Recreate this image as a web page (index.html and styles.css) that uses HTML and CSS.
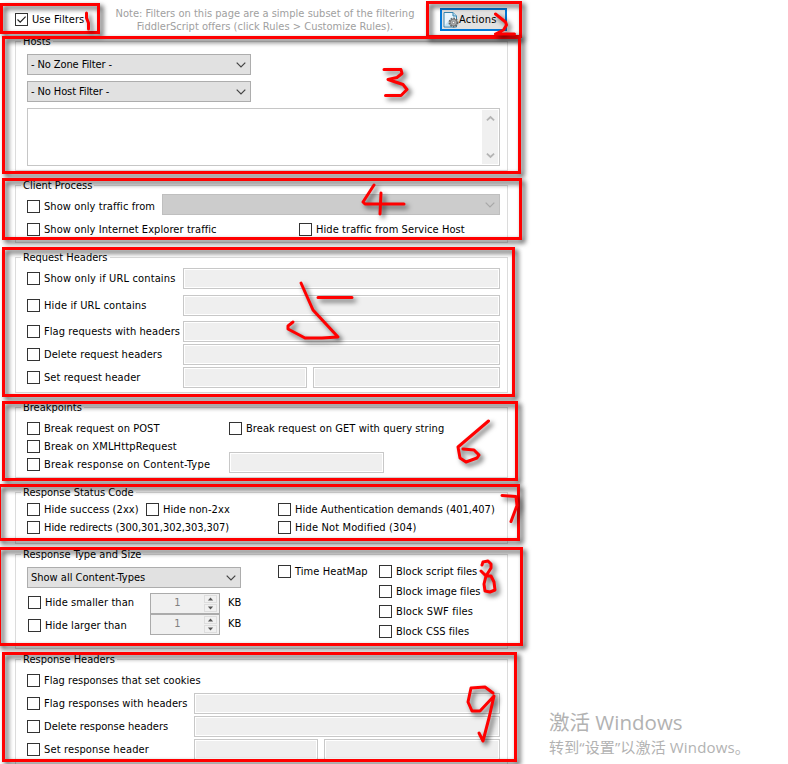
FILE: index.html
```html
<!DOCTYPE html>
<html lang="en">
<head>
<meta charset="utf-8">
<title>Filters</title>
<link rel="stylesheet" href="styles.css">
</head>
<body>
<main class="page">
  <header class="top">
    <label class="check use"><i class="box ticked"><svg viewBox="0 0 11 11"><path d="M1.5 5.5 4.2 8.2 9.6 2.6"/></svg></i><span>Use Filters</span></label>
    <p class="note">Note: Filters on this page are a simple subset of the filtering<br>FiddlerScript offers (click Rules &gt; Customize Rules).</p>
    <button class="actions"><svg width="16" height="16" viewBox="0 0 16 16"><path d="M1 .5h9l3.500 3.500v11H1z" fill="#eaf6fd" stroke="#3683ae"/><path d="M10 .5V4h3.500" fill="#b9dcef" stroke="#3683ae"/><path d="M2 13 9 5v9H2z" fill="#c4e2f3"/><g fill="#b4b4b4" stroke="#666"><circle cx="10.500" cy="10.500" r="4" stroke-width="2" stroke-dasharray="1.6 1"/><circle cx="10.500" cy="10.500" r="3.200" stroke-width=".7"/><circle cx="10.500" cy="10.500" r="1.200" fill="#fff" stroke-width=".7"/></g></svg><span>Actions</span></button>
  </header>

  <section class="group hosts">
    <h2>Hosts</h2>
    <div class="select">- No Zone Filter -<svg class="chev" viewBox="0 0 10 6"><path d="M.7.7 5 5 9.3.7"/></svg></div>
    <div class="select">- No Host Filter -<svg class="chev" viewBox="0 0 10 6"><path d="M.7.7 5 5 9.3.7"/></svg></div>
    <div class="area"><div class="scroll"><svg viewBox="0 0 10 7"><path d="M1 5.500 5 1.800 9 5.500"/></svg><svg viewBox="0 0 10 7"><path d="M1 1.500 5 5.200 9 1.500"/></svg></div></div>
  </section>

  <section class="group client">
    <h2>Client Process</h2>
    <div class="row h23"><label class="check w135"><i class="box"></i><span>Show only traffic from</span></label><div class="select off"><svg class="chev" viewBox="0 0 10 6"><path d="M.7.7 5 5 9.3.7"/></svg></div></div>
    <div class="row h23"><label class="check w272"><i class="box"></i><span>Show only Internet Explorer traffic</span></label><label class="check"><i class="box"></i><span>Hide traffic from Service Host</span></label></div>
  </section>

  <section class="group request">
    <h2>Request Headers</h2>
    <div class="row h27"><label class="check w156"><i class="box"></i><span class="wide">Show only if URL contains</span></label><div class="input"></div></div>
    <div class="row h27"><label class="check w156"><i class="box"></i><span class="wide">Hide if URL contains</span></label><div class="input"></div></div>
    <div class="row h25"><label class="check w156"><i class="box"></i><span>Flag requests with headers</span></label><div class="input"></div></div>
    <div class="row h23"><label class="check w156"><i class="box"></i><span>Delete request headers</span></label><div class="input"></div></div>
    <div class="row h23"><label class="check w156"><i class="box"></i><span>Set request header</span></label><div class="input name"></div><div class="input"></div></div>
  </section>

  <section class="group breaks">
    <h2>Breakpoints</h2>
    <div class="row h18"><label class="check w202"><i class="box"></i><span>Break request on POST</span></label><label class="check"><i class="box"></i><span>Break request on GET with query string</span></label></div>
    <div class="row h18"><label class="check"><i class="box"></i><span class="wide">Break on XMLHttpRequest</span></label></div>
    <div class="row h18"><label class="check w202"><i class="box"></i><span class="wider">Break response on Content-Type</span></label><div class="input type"></div></div>
  </section>

  <section class="group status">
    <h2>Response Status Code</h2>
    <div class="row h18"><label class="check w119"><i class="box"></i><span>Hide success (2xx)</span></label><label class="check w132"><i class="box"></i><span>Hide non-2xx</span></label><label class="check"><i class="box"></i><span class="plain">Hide Authentication demands (401,407)</span></label></div>
    <div class="row h18"><label class="check w251"><i class="box"></i><span class="tight">Hide redirects (300,301,302,303,307)</span></label><label class="check"><i class="box"></i><span class="wide">Hide Not Modified (304)</span></label></div>
  </section>

  <section class="group size">
    <h2>Response Type and Size</h2>
    <div class="cols">
      <div class="limits">
        <div class="select plain">Show all Content-Types<svg class="chev" viewBox="0 0 10 6"><path d="M.7.7 5 5 9.3.7"/></svg></div>
        <div class="limit-grid">
          <div class="limit-labels"><label class="check"><i class="box"></i><span>Hide smaller than</span></label><label class="check"><i class="box"></i><span>Hide larger than</span></label></div>
          <div class="spins">
            <div class="spin"><b>1</b><em><svg viewBox="0 0 13 8"><path d="M3 6h7L6.500 2z"/></svg><svg viewBox="0 0 13 8"><path d="M3 2h7L6.500 6z"/></svg></em></div>
            <div class="spin"><b>1</b><em><svg viewBox="0 0 13 8"><path d="M3 6h7L6.500 2z"/></svg><svg viewBox="0 0 13 8"><path d="M3 2h7L6.500 6z"/></svg></em></div>
          </div>
          <div class="units"><span>KB</span><span>KB</span></div>
        </div>
      </div>
      <label class="check heat"><i class="box"></i><span>Time HeatMap</span></label>
      <div class="blocks">
        <label class="check"><i class="box"></i><span class="plain">Block script files</span></label>
        <label class="check"><i class="box"></i><span class="plain">Block image files</span></label>
        <label class="check"><i class="box"></i><span class="wide">Block SWF files</span></label>
        <label class="check"><i class="box"></i><span class="plain">Block CSS files</span></label>
      </div>
    </div>
  </section>

  <section class="group headers">
    <h2>Response Headers</h2>
    <div class="row h23"><label class="check"><i class="box"></i><span class="plain">Flag responses that set cookies</span></label></div>
    <div class="row h23"><label class="check w167"><i class="box"></i><span>Flag responses with headers</span></label><div class="input"></div></div>
    <div class="row h23"><label class="check w167"><i class="box"></i><span class="plain">Delete response headers</span></label><div class="input"></div></div>
    <div class="row h23"><label class="check w167"><i class="box"></i><span class="wide">Set response header</span></label><div class="input name"></div><div class="input"></div></div>
  </section>

  <aside class="activate"><p class="big">激活 Windows</p><p>转到“设置”以激活 Windows。</p></aside>

  <svg class="marks" width="788" height="764" viewBox="0 0 788 764">
    <g class="frames">
      <rect x="1.500" y="4.500" width="97" height="28"/>
      <rect x="427.500" y="2.500" width="93" height="34"/>
      <rect x="3.500" y="37.500" width="516" height="135"/>
      <rect x="3.500" y="179.500" width="517" height="59"/>
      <rect x="3.500" y="248.500" width="510" height="147"/>
      <rect x="3.500" y="402.500" width="513" height="77"/>
      <rect x="-.5" y="485.500" width="519" height="54"/>
      <rect x="-.5" y="548.500" width="522" height="96"/>
      <rect x="3.500" y="653.500" width="512" height="107"/>
    </g>
    <g class="ink">
      <path d="M86.500 13v5l2 5v6"/>
      <path d="M495.500 14l10 8 1 3-3 5-8 4h19"/>
      <path d="M384 69.500h17l1 4-5 4-9 2 15 5 4 5-6 6H385.500"/>
      <path d="M374 185l-11 17 2 2h39M381 193l-1 21"/>
      <path d="M301 283l12 27 25 27-16 1h-17l-17-9v-3l5-4M318 297.500h34"/>
      <path d="M488.500 421L458 447l2 11 6 4 11-4 2-3-5-5-11-1"/>
      <path d="M502 495.500l14 1 1 9-6 16"/>
      <path d="M482 565l1-3 5-1 3 3v4l-5 8-5-5M486 576l-2 8 1 7 5 1 5-2-1-8-3-6z"/>
      <path d="M493 693l-8-6-14 1-3 14 4 9h8l14-15-5 22-6 23-4-8"/>
    </g>
  </svg>
</main>
</body>
</html>
```
FILE: styles.css
```css
* { box-sizing: border-box; }
body { margin: 0; background: #fff; overflow: hidden; }
p, h2 { margin: 0; font-weight: normal; }
.page { position: relative; width: 788px; height: 764px; overflow: hidden; font: 11px/14px "DejaVu Sans Condensed", "DejaVu Sans", sans-serif; font-stretch: condensed; color: #000; }
.top { display: flex; height: 41px; padding-left: 15px; }
.check { display: flex; align-items: center; flex: none; height: 13px; white-space: nowrap; letter-spacing: .08px; }
.check span { padding-top: 1px; }
.check .wide { letter-spacing: .14px; }
.check .wider { letter-spacing: .22px; }
.check .tight { letter-spacing: -.05px; }
.check .plain { letter-spacing: .02px; }
.box { width: 13px; height: 13px; margin-right: 4px; flex: none; border: 1px solid #333; background: #fff; }
.ticked svg { display: block; fill: none; stroke: #222; stroke-width: 1.2; }
.use { margin-top: 13px; width: 91px; letter-spacing: .1px; }
.note { margin-top: 7px; width: 320px; margin-left: -1px; margin-right: 1px; text-align: center; line-height: 13px; color: #a0a0a0; white-space: nowrap; letter-spacing: .02px; }
.actions { display: flex; align-items: center; width: 67px; height: 23px; margin: 8px 0 0 14px; padding: 0 1px; border: 2px solid #0078d7; background: #e1e1e1; font: inherit; font-stretch: condensed; white-space: nowrap; letter-spacing: .2px; }
.actions svg { flex: none; }
.group { width: 493px; margin-left: 15px; padding-left: 11px; border: 1px solid #dcdcdc; }
.group h2 { width: max-content; height: 14px; margin: -8px 0 0 -6px; padding: 0 2px; background: #fff; font-size: 11px; line-height: 16px; letter-spacing: 0; }
.hosts { height: 130px; }
.client { height: 58px; margin-top: 14px; }
.request { height: 136px; margin-top: 14px; }
.breaks { height: 71px; margin-top: 14px; }
.status { height: 52px; margin-top: 14px; }
.size { height: 95px; margin-top: 10px; }
.headers { height: 120px; margin-top: 10px; }
.select { display: flex; align-items: center; justify-content: space-between; width: 224px; height: 21px; margin-bottom: 6px; padding: 1px 4px 0 3px; border: 1px solid #adadad; background: #e1e1e1; letter-spacing: -.1px; }
.select.plain { letter-spacing: 0; }
.group.hosts h2 { margin-bottom: 6px; }
.chev { width: 10px; height: 6px; fill: none; stroke: #444; stroke-width: 1.2; }
.area { display: flex; justify-content: flex-end; width: 473px; height: 58px; padding: 1px; border: 1px solid #c6c6c6; }
.scroll { display: flex; flex-direction: column; justify-content: space-between; align-items: center; width: 16px; padding: 5px 0; background: #f0f0f0; }
.scroll svg { width: 9px; height: 7px; fill: none; stroke: #b4b4b4; stroke-width: 2; }
.row { display: flex; align-items: center; width: 473px; }
.h23 { height: 23px; }
.h27 { height: 27px; }
.h25 { height: 25px; margin-bottom: -1px; }
.h18 { height: 18px; }
.group.client h2 { margin-bottom: 3px; }
.group.request h2 { margin-bottom: 1px; }
.group.breaks h2 { margin-bottom: 5px; }
.group.status h2 { margin-bottom: 1px; }
.group.headers h2 { margin-bottom: 3px; }
.w119 { width: 119px; }
.w132 { width: 132px; }
.w135 { width: 135px; }
.w156 { width: 156px; }
.w167 { width: 167px; }
.w202 { width: 202px; }
.w251 { width: 251px; }
.w272 { width: 272px; }
.select.off { flex: 1; justify-content: flex-end; margin: 0 0 4px; border-color: #bfbfbf; background: #ccc; }
.off .chev { stroke: #a8a8a8; }
.input { flex: 1; height: 21px; border: 1px solid #c8c8c8; background: #efefef; box-shadow: inset 0 0 0 1px #fff; }
.input.name { flex: none; width: 124px; margin-right: 6px; }
.input.type { flex: none; width: 155px; margin-top: -4px; }
.cols { display: flex; padding-top: 6px; }
.limits { width: 251px; }
.size .select { width: 214px; margin: 0 0 5px; }
.limit-grid { display: flex; padding-left: 1px; }
.limit-labels { display: flex; flex-direction: column; gap: 10px; width: 122px; padding-top: 3px; }
.spins { width: 70px; }
.spin { display: flex; height: 21px; border: 1px solid #ababab; background: #f0f0f0; color: #808080; }
.spin b { width: 53px; text-align: center; line-height: 18px; font-weight: normal; }
.spin em { display: flex; flex-direction: column; gap: 1px; padding: 1px 0; }
.spin em svg { width: 13px; height: 8px; border: 1px solid #ddd; fill: #555; }
.units { padding: 3px 0 0 8px; }
.units span { display: block; height: 21px; }
.heat { width: 101px; margin-top: -2px; }
.blocks { display: flex; flex-direction: column; gap: 7px; margin-top: -2px; }
.activate { position: absolute; left: 549px; top: 710px; color: #b2b2b2; font: 15px/24px "Open Sans", "Noto Sans CJK SC", sans-serif; font-stretch: normal; white-space: nowrap; letter-spacing: .15px; }
.activate .big { font-size: 20.5px; line-height: 25px; letter-spacing: 0; }
.marks { position: absolute; left: 0; top: 0; fill: none; stroke: #f00; stroke-width: 3; }
.frames rect { filter: drop-shadow(3px 3px 2.500px rgba(0, 0, 0, .75)); }
.ink path { filter: drop-shadow(3px 3px 2.500px rgba(0, 0, 0, .65)); }
.ink { stroke-linecap: round; stroke-linejoin: round; }
```
